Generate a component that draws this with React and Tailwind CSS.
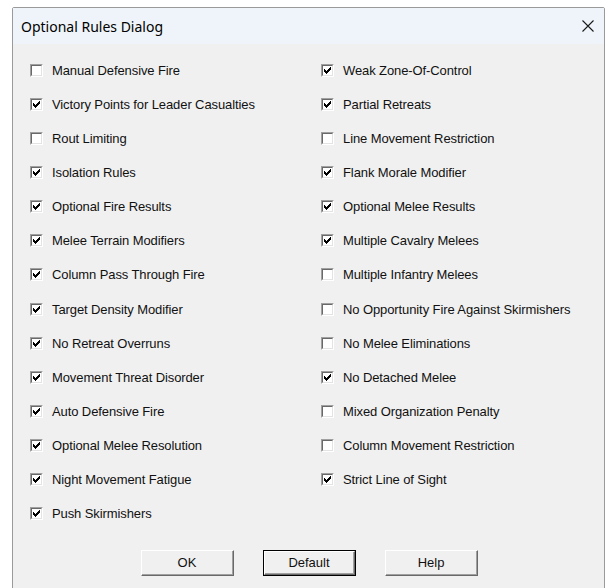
import React from 'react';

const left = [
  ['Manual Defensive Fire', false],
  ['Victory Points for Leader Casualties', true],
  ['Rout Limiting', false],
  ['Isolation Rules', true],
  ['Optional Fire Results', true],
  ['Melee Terrain Modifiers', true],
  ['Column Pass Through Fire', true],
  ['Target Density Modifier', true],
  ['No Retreat Overruns', true],
  ['Movement Threat Disorder', true],
  ['Auto Defensive Fire', true],
  ['Optional Melee Resolution', true],
  ['Night Movement Fatigue', true],
  ['Push Skirmishers', true],
];

const right = [
  ['Weak Zone-Of-Control', true],
  ['Partial Retreats', true],
  ['Line Movement Restriction', false],
  ['Flank Morale Modifier', true],
  ['Optional Melee Results', true],
  ['Multiple Cavalry Melees', true],
  ['Multiple Infantry Melees', false],
  ['No Opportunity Fire Against Skirmishers', false],
  ['No Melee Eliminations', false],
  ['No Detached Melee', true],
  ['Mixed Organization Penalty', false],
  ['Column Movement Restriction', false],
  ['Strict Line of Sight', true],
];

// pixel rows of the classic 7x7 tick: [x, y, width]
const tick = [
  [6, 0, 1],
  [5, 1, 2],
  [0, 2, 1], [4, 2, 3],
  [0, 3, 2], [3, 3, 3],
  [0, 4, 5],
  [1, 5, 3],
  [2, 6, 1],
];

// classic sunken 3D checkbox
const CheckBox = ({ checked }) => (
  <div className="w-[13px] h-[13px] shrink-0 border-t border-l border-t-[#a0a0a0] border-l-[#a0a0a0] border-b border-r border-b-white border-r-white">
    <div className="w-full h-full bg-white border-t border-l border-t-[#696969] border-l-[#696969] border-b border-r border-b-[#e3e3e3] border-r-[#e3e3e3] flex items-center justify-center">
      {checked && (
        <svg width="7" height="7" viewBox="0 0 7 7" shapeRendering="crispEdges">
          {tick.map(([x, y, w]) => (
            <rect key={`${x}-${y}`} x={x} y={y} width={w} height="1" fill="#000" />
          ))}
        </svg>
      )}
    </div>
  </div>
);

const Option = ({ label, checked }) => (
  <div className="flex items-center gap-[9px] h-[34.15px]">
    <CheckBox checked={checked} />
    <span className="text-[13px] text-[#111] leading-none tracking-[-0.1px]">{label}</span>
  </div>
);

const Button = ({ children, isDefault }) => (
  <div className={`w-[93px] h-[26px] ${isDefault ? 'border border-[#000]' : ''}`}>
    <div className="w-full h-full border-t border-l border-t-white border-l-white border-b border-r border-b-[#696969] border-r-[#696969]">
      <div className="w-full h-full border-b border-r border-b-[#a0a0a0] border-r-[#a0a0a0] bg-[#f0f0f0] flex items-center justify-center text-[13px] text-[#111]">
        {children}
      </div>
    </div>
  </div>
);

export default function App() {
  return (
    <div className="w-[606px] h-[588px] bg-white pl-[12px] pt-[7px] overflow-hidden" style={{ fontFamily: '"Liberation Sans", Arial, sans-serif' }}>
      <div className="w-[593px] h-[600px] flex flex-col border border-[#9a9a9a] rounded-tl-[2px] rounded-tr-[2px]">
        <div className="h-[36px] bg-[#eef4f9] flex items-center justify-between pl-[8px] pr-[10px]">
          <span className="text-[14px] text-black" style={{ fontFamily: '"Noto Sans", sans-serif' }}>Optional Rules Dialog</span>
          <svg width="12" height="12" viewBox="0 0 12 12">
            <path d="M0.5 0.5L11.5 11.5M11.5 0.5L0.5 11.5" stroke="#1a1a1a" strokeWidth="1.1" />
          </svg>
        </div>
        <div className="flex-1 bg-[#f0f0f0] pt-[9px] pl-[17px]">
          <div className="grid grid-cols-[291px_1fr]">
            <div className="flex flex-col">
              {left.map(([l, c]) => <Option key={l} label={l} checked={c} />)}
            </div>
            <div className="flex flex-col">
              {right.map(([l, c]) => <Option key={l} label={l} checked={c} />)}
            </div>
          </div>
          <div className="flex gap-[29px] pl-[111px] mt-[19px]">
            <Button>OK</Button>
            <Button isDefault>Default</Button>
            <Button>Help</Button>
          </div>
        </div>
      </div>
    </div>
  );
}
